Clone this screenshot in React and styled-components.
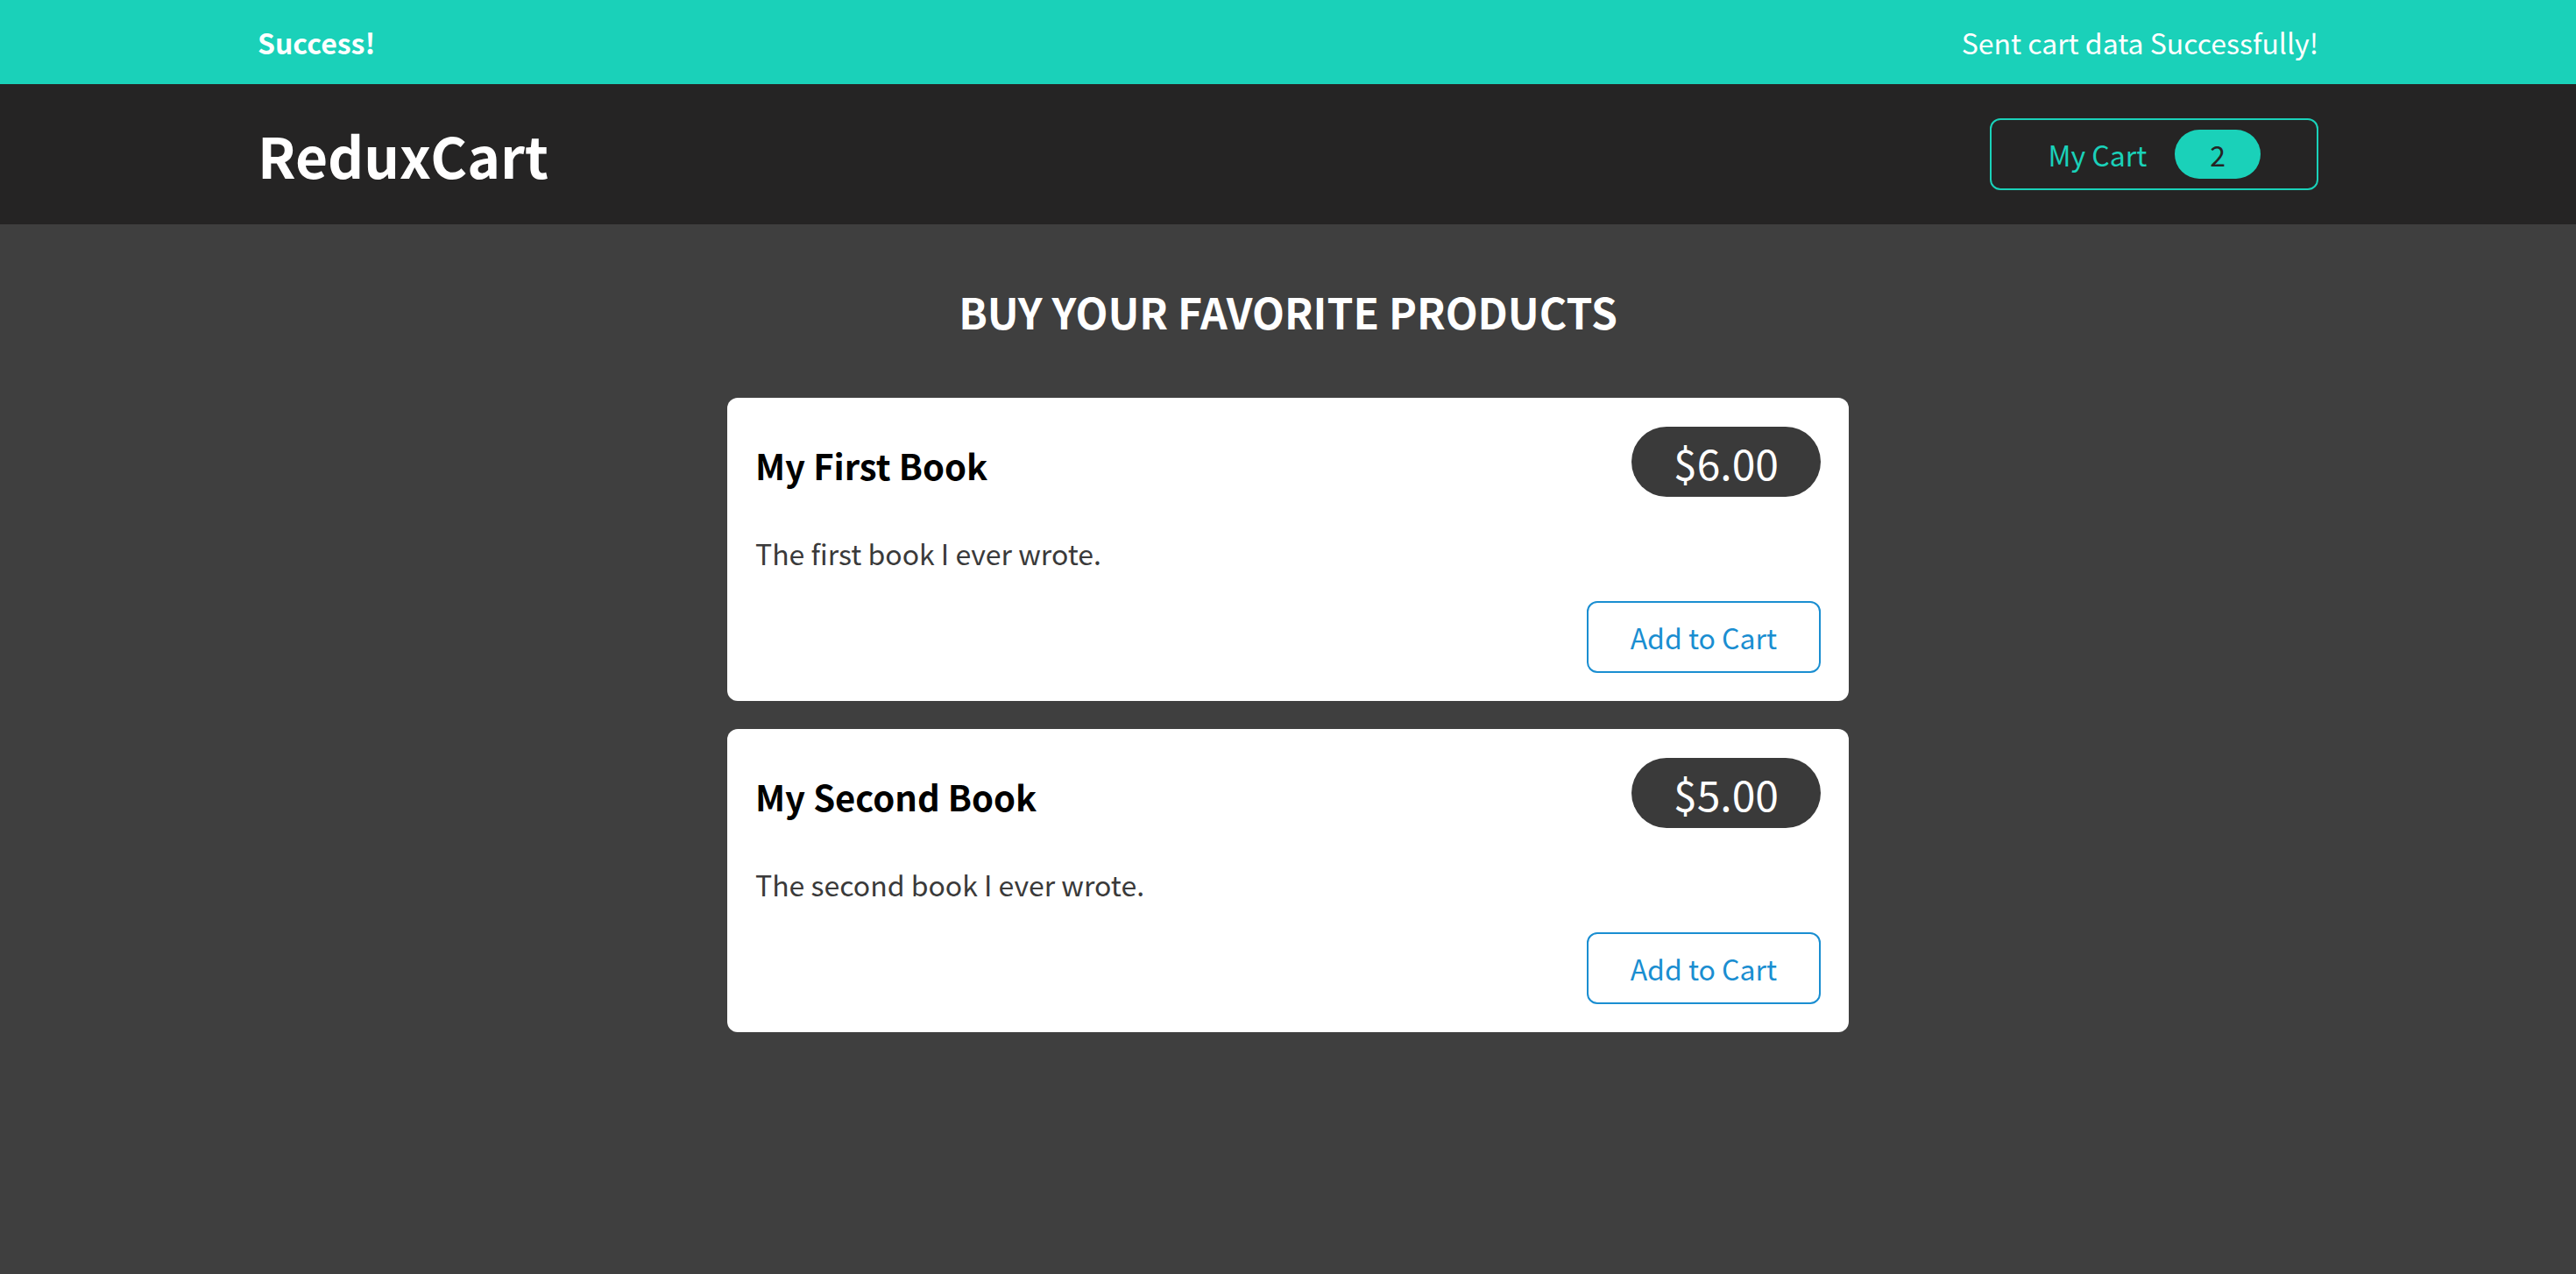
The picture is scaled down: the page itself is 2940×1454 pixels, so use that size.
import React, { useState } from "react";
import styled, { createGlobalStyle } from "styled-components";

const GlobalStyle = createGlobalStyle`
  * { box-sizing: border-box; }
  body {
    margin: 0;
    min-height: 100vh;
    background: #3f3f3f;
    color: #252424;
    font-family: "Noto Sans CJK JP", "Noto Sans", sans-serif;
    font-size: 32px;
    line-height: 46px;
  }
  h1, h2, h3, p, ul { margin: 0; padding: 0; }
  button { font: inherit; cursor: pointer; }
`;

const Notification = styled.section`
  display: flex;
  align-items: center;
  justify-content: space-between;
  height: 96px;
  padding: 0 10%;
  background: #1ad1b9;
  color: white;
`;

const NotificationTitle = styled.h2`
  font-size: 32px;
`;

const Header = styled.header`
  display: flex;
  align-items: center;
  justify-content: space-between;
  height: 160px;
  padding: 0 10%;
  background: #252424;
  color: white;
`;

const Brand = styled.h1`
  font-size: 64px;
  line-height: 92px;
`;

const Button = styled.button`
  display: flex;
  align-items: center;
  height: 82px;
  gap: 32px;
  padding: 0 ${(p) => (p.$wide ? "64px" : "48px")};
  border: 2px solid ${(p) => p.$color};
  border-radius: 12px;
  background: transparent;
  color: ${(p) => p.$color};
`;

const Badge = styled.span`
  padding: 5px 40px;
  border-radius: 30px;
  background: #1ad1b9;
  color: #252424;
`;

const Products = styled.section`
  max-width: 1280px;
  margin: 64px auto;
`;

const Heading = styled.h2`
  color: white;
  font-size: 48px;
  line-height: 70px;
  text-align: center;
  text-transform: uppercase;
`;

const ProductList = styled.ul`
  display: grid;
  gap: 32px;
  margin-top: 64px;
  list-style: none;
`;

const Card = styled.li`
  padding: 32px;
  border-radius: 12px;
  background: white;
  color: #3a3a3a;
`;

const CardHeader = styled.header`
  display: flex;
  align-items: baseline;
  justify-content: space-between;
  padding: 1px 0;
`;

const CardTitle = styled.h3`
  color: black;
  font-size: 40px;
  line-height: 58px;
`;

const Price = styled.div`
  padding: 5px 48px;
  border-radius: 40px;
  background: #3a3a3a;
  color: white;
  font-size: 48px;
  line-height: 70px;
`;

const Description = styled.p`
  margin: 40px 0 32px;
`;

const Actions = styled.div`
  display: flex;
  justify-content: flex-end;
`;

const products = [
  { id: "p1", title: "My First Book", price: 6, text: "The first book I ever wrote." },
  { id: "p2", title: "My Second Book", price: 5, text: "The second book I ever wrote." },
];

export default function App() {
  const [quantity, setQuantity] = useState(2);

  return (
    <>
      <GlobalStyle />
      <Notification role="status">
        <NotificationTitle>Success!</NotificationTitle>
        <p>Sent cart data Successfully!</p>
      </Notification>
      <Header>
        <Brand>ReduxCart</Brand>
        <Button type="button" $wide $color="#1ad1b9">
          <span>My Cart</span>
          <Badge>{quantity}</Badge>
        </Button>
      </Header>
      <main>
        <Products>
          <Heading>Buy your favorite products</Heading>
          <ProductList>
            {products.map((product) => (
              <Card key={product.id}>
                <CardHeader>
                  <CardTitle>{product.title}</CardTitle>
                  <Price>{`$${product.price.toFixed(2)}`}</Price>
                </CardHeader>
                <Description>{product.text}</Description>
                <Actions>
                  <Button type="button" $color="#1a8ed1" onClick={() => setQuantity(quantity + 1)}>
                    Add to Cart
                  </Button>
                </Actions>
              </Card>
            ))}
          </ProductList>
        </Products>
      </main>
    </>
  );
}
